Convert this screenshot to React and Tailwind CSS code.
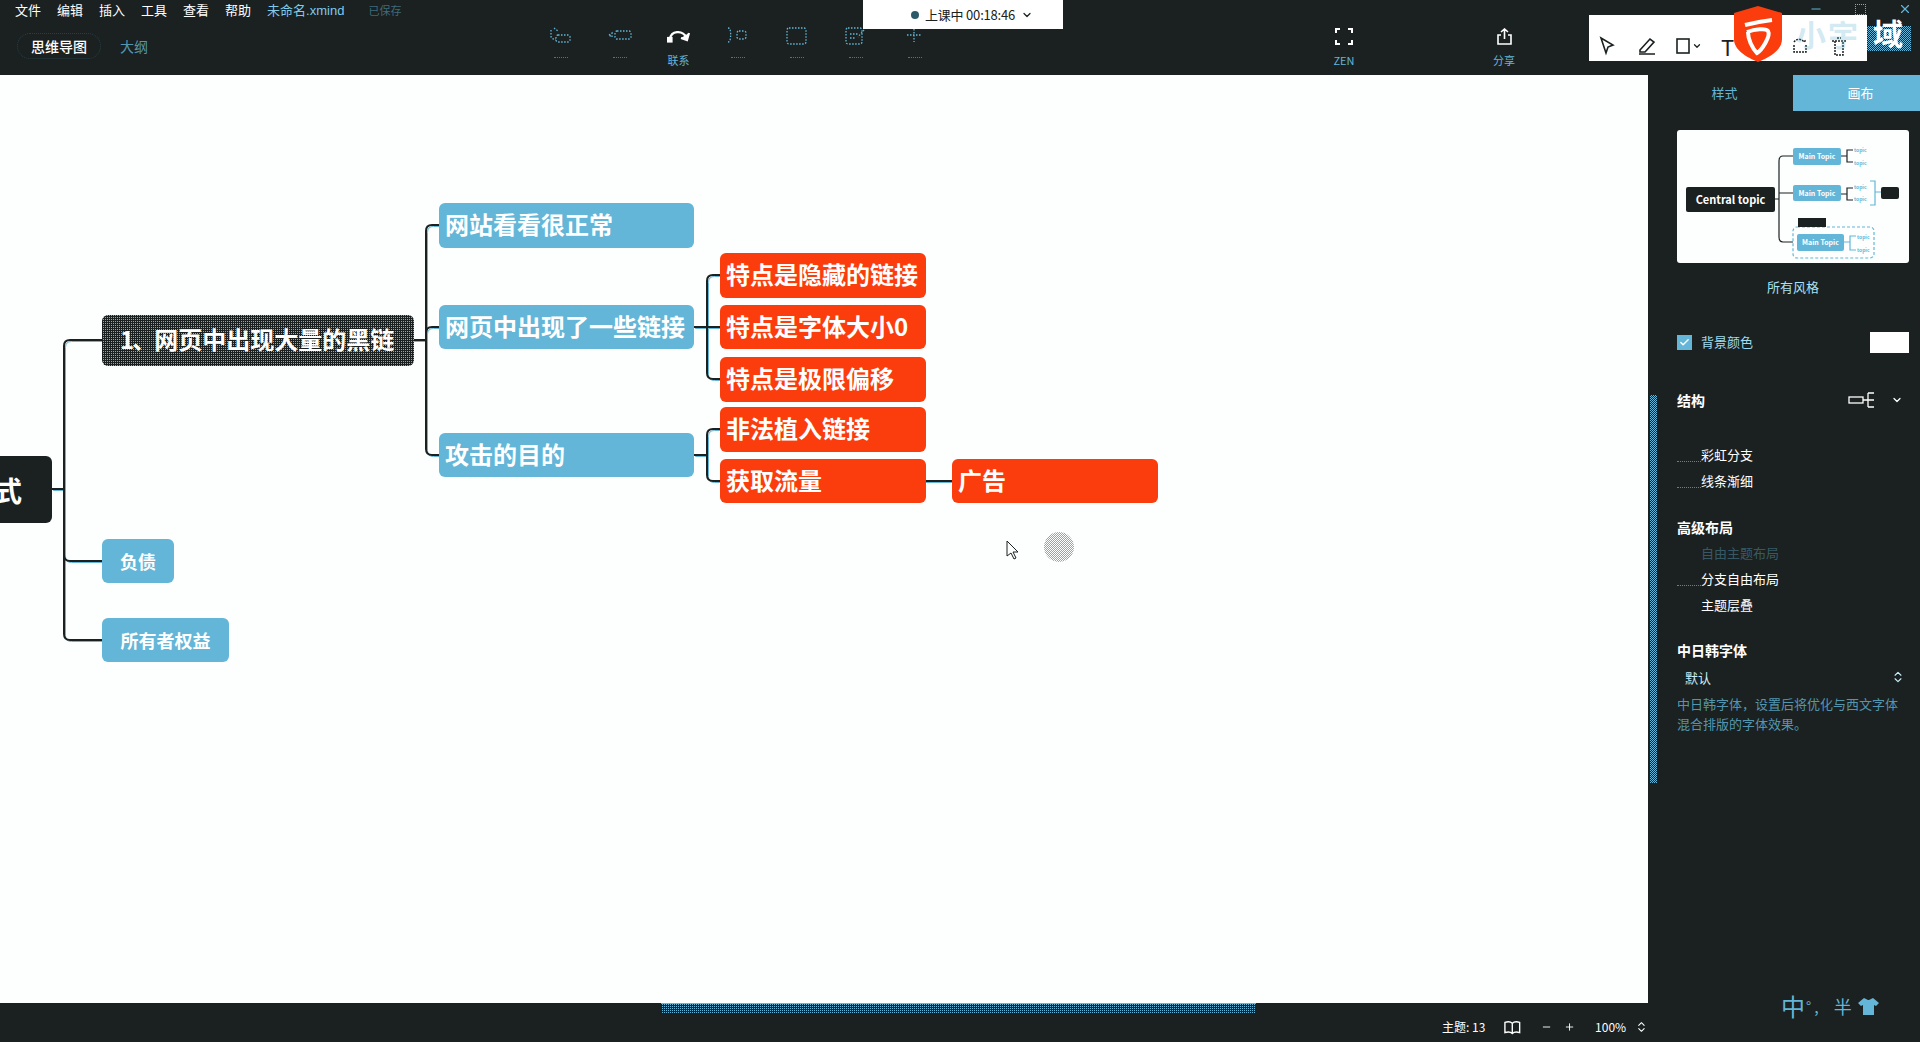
import React from "react";
import { Check, ChevronDown, ChevronsUpDown, Minus, Plus, X } from "lucide-react";

const menus = ["文件", "编辑", "插入", "工具", "查看", "帮助"];

const dim = { strokeDasharray: "1.5 1.5" };

const tools = [
  {
    label: null,
    icon: (
      <g {...dim}>
        <path d="M2 3v6a3 3 0 0 0 3 3h2" />
        <rect x="7" y="8" width="14" height="7" rx="2" />
        <path d="M5 1l4 3" />
      </g>
    ),
  },
  {
    label: null,
    icon: (
      <g {...dim}>
        <path d="M1 8l3-2v4z" />
        <rect x="7" y="4" width="16" height="8" rx="2" />
      </g>
    ),
  },
  {
    label: "联系",
    icon: (
      <g strokeWidth="2.2">
        <path d="M3 12c1-8 12-10 17-1" />
        <path d="M22 6l-2 7-6-2" fill="#ffffff" />
        <rect x="1" y="11" width="3.5" height="3.5" fill="#ffffff" />
      </g>
    ),
  },
  {
    label: null,
    icon: (
      <g {...dim}>
        <path d="M2 1c3 0 2 4 3 7-1 2 0 7-3 7" />
        <rect x="11" y="4" width="9" height="8" rx="2" />
      </g>
    ),
  },
  {
    label: null,
    icon: <rect x="2" y="1" width="19" height="16" rx="2" {...dim} />,
  },
  {
    label: null,
    icon: (
      <g {...dim}>
        <rect x="2" y="1" width="16" height="16" rx="2" />
        <path d="M6 7h8M6 11h5M20 3l-6 7" />
      </g>
    ),
  },
  {
    label: null,
    icon: <path d="M11 2v13M4 8h14" {...dim} />,
  },
];

// 连线：[起点x, 起点y, 拐点x, 终点y, 终点x]
const branches = [
  [52, 414, 64, 265, 102],
  [52, 414, 64, 486, 102],
  [52, 414, 64, 565, 102],
  [413, 265, 426, 150, 439],
  [413, 265, 426, 252, 439],
  [413, 265, 426, 380, 439],
  [694, 252, 707, 200, 720],
  [694, 252, 707, 252, 720],
  [694, 252, 707, 304, 720],
  [694, 380, 707, 354, 720],
  [694, 380, 707, 406, 720],
];

const elbow = ([x1, y1, mx, y2, x2]) => {
  if (y1 === y2) return `M${x1} ${y1}H${x2}`;
  const r = y2 > y1 ? 6 : -6;
  return `M${x1} ${y1}H${mx}V${y2 - r}Q${mx} ${y2} ${mx + 6} ${y2}H${x2}`;
};

const nodes = [
  { text: "网站看看很正常", x: 439, y: 128, w: 255, h: 45, tone: "blue" },
  { text: "网页中出现了一些链接", x: 439, y: 230, w: 255, h: 44, tone: "blue" },
  { text: "攻击的目的", x: 439, y: 358, w: 255, h: 44, tone: "blue" },
  { text: "特点是隐藏的链接", x: 720, y: 178, w: 206, h: 45, tone: "red" },
  { text: "特点是字体大小0", x: 720, y: 230, w: 206, h: 44, tone: "red" },
  { text: "特点是极限偏移", x: 720, y: 282, w: 206, h: 45, tone: "red" },
  { text: "非法植入链接", x: 720, y: 332, w: 206, h: 45, tone: "red" },
  { text: "获取流量", x: 720, y: 384, w: 206, h: 44, tone: "red" },
  { text: "广告", x: 952, y: 384, w: 206, h: 44, tone: "red" },
];

function Node({ text, x, y, w, h, tone }) {
  return (
    <div
      className={`absolute flex items-center rounded-[6px] pb-[3px] pl-[6px] text-[24px] leading-none font-bold text-white ${
        tone === "red" ? "bg-[#fb3c0d]" : "bg-[#63b6d7]"
      }`}
      style={{ left: x, top: y, width: w, height: h }}
    >
      {text}
    </div>
  );
}

function Preview() {
  return (
    <div className="relative h-[133px] w-[232px] rounded-[3px] bg-[#fdfffe]">
      <svg className="absolute inset-0" width="232" height="133" fill="none" stroke="#1b2121" strokeWidth="1.2">
        <path d="M98 69h4M102 69V31q0-5 4-5h10M102 63h14M102 69v38q0 5 4 5h10" />
        <path d="M164 26h6M170 26v-6h6M170 26v6h6M164 64h6M170 64v-6h6M170 64v6h6" />
        <path d="M167 112h6M173 112v-6h6M173 112v8h6" stroke="#63b6d7" />
        <path d="M193 51h5v24h-5M198 62h6" stroke="#63b6d7" />
        <rect x="116" y="97" width="81" height="31" rx="4" stroke="#63b6d7" strokeDasharray="3 2" />
      </svg>
      <div className="absolute top-[57px] left-[9px] flex h-[25px] w-[89px] items-center justify-center rounded-[2px] bg-[#1b2121] text-[11px] font-semibold text-white">
        Central topic
      </div>
      <div className="absolute top-[18px] left-[116px] flex h-[17px] w-[48px] items-center justify-center rounded-[2px] bg-[#63b6d7] text-[7px] font-bold text-white">
        Main Topic
      </div>
      <div className="absolute top-[55px] left-[116px] flex h-[16px] w-[48px] items-center justify-center rounded-[2px] bg-[#63b6d7] text-[7px] font-bold text-white">
        Main Topic
      </div>
      <div className="absolute top-[104px] left-[120px] flex h-[17px] w-[47px] items-center justify-center rounded-[2px] bg-[#63b6d7] text-[7px] font-bold text-white">
        Main Topic
      </div>
      <div className="absolute top-[88px] left-[121px] h-[9px] w-[28px] bg-[#1b2121]" />
      <div className="absolute top-[57px] left-[204px] h-[12px] w-[18px] rounded-[2px] bg-[#1b2121]" />
      {[
        [177, 16],
        [177, 29],
        [177, 53],
        [177, 65],
        [180, 103],
        [180, 116],
      ].map(([x, y]) => (
        <span key={`${x}-${y}`} className="absolute text-[5px] leading-[8px] font-bold text-[#63b6d7]" style={{ left: x, top: y }}>
          topic
        </span>
      ))}
    </div>
  );
}

function Row({ text, mark, muted }) {
  return (
    <div className="flex h-[26px] items-center">
      <span className={`h-px w-[24px] ${mark ? "translate-y-[7px] border-b border-dotted border-[#63b6d7]/70" : ""}`} />
      <span className={muted ? "text-[#63b6d7]/40" : "text-white"}>{text}</span>
    </div>
  );
}

export default function App() {
  return (
    <div className="flex h-[1042px] w-[1920px] flex-col overflow-hidden bg-[#1b2121] font-['Noto_Sans_CJK_SC','Noto_Sans',sans-serif] text-[13px] text-[#63b6d7]">
      <header className="relative flex h-[75px] shrink-0">
        <div className="w-[531px] shrink-0">
          <div className="flex h-[20px] items-center gap-4 pl-[15px] text-white">
            {menus.map((m) => (
              <span key={m}>{m}</span>
            ))}
            <span className="text-[#7fcbe8]">
              未命名<span className="font-['Liberation_Sans',sans-serif]">.xmind</span>
            </span>
            <span className="ml-2 text-[11px] text-[#63b6d7]/50">已保存</span>
          </div>
          <div className="mt-[13px] flex items-center pl-[17px]">
            <span className="flex h-[26px] w-[84px] items-center justify-center rounded-full border border-dotted border-[#63b6d7]/20 text-[14px] font-medium text-white">
              思维导图
            </span>
            <span className="ml-[19px] text-[14px] text-[#63b6d7]/80">大纲</span>
          </div>
        </div>

        <div className="flex">
          {tools.map((t, i) => (
            <div key={i} className="flex w-[59px] flex-col items-center pt-[27px]">
              <svg width="24" height="18" viewBox="0 0 24 18" fill="none" stroke={t.label ? "#ffffff" : "#63b6d7"} strokeWidth="1.3">
                {t.icon}
              </svg>
              {t.label ? (
                <span className="mt-[7px] text-[11px] leading-[16px]">{t.label}</span>
              ) : (
                <span className="mt-[12px] h-px w-[14px] border-t border-dotted border-[#63b6d7]/60" />
              )}
            </div>
          ))}
        </div>

        <div className="ml-[370px] flex w-[60px] flex-col items-center pt-[28px]">
          <svg width="18" height="17" viewBox="0 0 18 17" fill="none" stroke="#ffffff" strokeWidth="2">
            <path d="M1 5V1h4M13 1h4v4M17 12v4h-4M5 16H1v-4" />
          </svg>
          <span className="mt-[7px] text-[11px] leading-[16px]">ZEN</span>
        </div>
        <div className="ml-[100px] flex w-[60px] flex-col items-center pt-[28px]">
          <svg width="17" height="17" viewBox="0 0 17 17" fill="none" stroke="#ffffff" strokeWidth="1.6">
            <path d="M5 7H2v9h13V7h-3M8.5 11V1M5 4l3.5-3L12 4" />
          </svg>
          <span className="mt-[7px] text-[11px] leading-[16px]">分享</span>
        </div>

        {/* 上课计时 */}
        <div className="absolute top-0 left-[863px] flex h-[29px] w-[200px] items-center justify-center gap-[6px] bg-white pl-[18px] text-[13px] text-[#1b2121]">
          <span className="h-[8px] w-[8px] rounded-full bg-[#2d5a6b]" />
          <span className="tracking-[-0.2px]">上课中 00:18:46</span>
          <ChevronDown size={12} strokeWidth={2.5} />
        </div>

        {/* 窗口按钮 */}
        <div className="absolute top-[2px] right-[8px] flex items-center gap-[32px] text-[#63b6d7]">
          <Minus size={14} />
          <span className="h-[11px] w-[11px] border border-dotted border-[#63b6d7]" />
          <X size={14} />
        </div>

        {/* 标注工具条 */}
        <div className="absolute top-[15px] left-[1589px] flex h-[46px] w-[278px] items-center bg-white pt-[15px] pl-[8px] text-[#1b2121]">
          <svg width="20" height="20" viewBox="0 0 20 20" fill="none" stroke="#1b2121" strokeWidth="1.6">
            <path d="M4 2l12 7-5 2-2 6z" />
          </svg>
          <svg className="ml-[20px]" width="20" height="20" viewBox="0 0 20 20" fill="none" stroke="#1b2121" strokeWidth="1.6">
            <path d="M3 14L13 3l4 3-9 10H3zM2 18h16" />
          </svg>
          <svg className="ml-[18px]" width="16" height="18" viewBox="0 0 16 18" fill="none" stroke="#1b2121" strokeWidth="1.6">
            <rect x="2" y="2" width="12" height="14" />
          </svg>
          <ChevronDown className="ml-[1px]" size={10} strokeWidth={3} />
          <span className="ml-[19px] text-[22px] leading-none">T</span>
          <svg className="ml-[56px]" width="20" height="20" viewBox="0 0 20 20" fill="none" stroke="#1b2121" strokeWidth="1.5">
            <path d="M4 9v7h12V9M4 6a6 6 0 0 1 10 0l2-2" strokeDasharray="2 1" />
          </svg>
          <svg className="ml-[19px]" width="20" height="22" viewBox="0 0 20 22" fill="none" stroke="#1b2121" strokeWidth="1.5">
            <path d="M3 6h14M6 6v14h8V6M8 3h4" strokeDasharray="2 1" />
          </svg>
        </div>

        {/* 水印 */}
        <div className="absolute top-[26px] left-[1867px] h-[25px] w-[44px] bg-[conic-gradient(#63b6d7_25%,#1b2121_0_50%,#63b6d7_0_75%,#1b2121_0)] bg-[length:2px_2px]" />
        <div className="absolute top-[15px] left-[1796px] text-[30px] leading-[36px] font-bold tracking-[2px] whitespace-nowrap text-[#63b6d7]/30">
          小宇
        </div>
        <div className="absolute top-[14px] left-[1873px] text-[30px] leading-[36px] font-bold whitespace-nowrap text-white">域</div>
        <svg className="absolute top-[6px] left-[1734px]" width="48" height="56" viewBox="0 0 48 56">
          <path d="M24 0l24 7v26c0 11-12 18-24 23C12 51 0 44 0 33V7z" fill="#fb3c0d" />
          <path d="M11 19c8-2 18-4 27-5M13 26c8-3 19-4 21-1 3 5-6 19-11 22-5-5-9-14-9-21" fill="none" stroke="#fdfffe" strokeWidth="4" />
        </svg>
      </header>

      <div className="flex min-h-0 flex-1">
        <div className="flex w-[1648px] shrink-0 flex-col">
          <main className="relative h-[928px] overflow-hidden bg-[#fdfffe]">
            <svg className="absolute inset-0" width="1648" height="928" fill="none">
              {branches.map((b, i) => (
                <path key={`s${i}`} d={elbow(b)} stroke="#63b6d7" strokeWidth="1" transform="translate(1.5 1.5)" />
              ))}
              {branches.map((b, i) => (
                <path key={i} d={elbow(b)} stroke="#1b2121" strokeWidth="2" />
              ))}
              <path d="M926 406H952" stroke="#63b6d7" strokeWidth="1" transform="translate(0 1.5)" />
              <path d="M926 406H952" stroke="#1b2121" strokeWidth="2" />
            </svg>

            <div className="absolute top-[381px] left-[-60px] flex h-[67px] w-[112px] items-center justify-end rounded-[6px] bg-[#1b2121] pr-[30px] text-[28px] leading-none font-bold text-white">
              式
            </div>
            <div className="absolute top-[240px] left-[102px] flex h-[51px] w-[312px] items-center rounded-[6px] bg-[conic-gradient(#63b6d7_25%,#1b2121_0_50%,#1b2121_0_75%,#1b2121_0)] bg-[length:2px_2px] pb-[3px] pl-[18px] text-[24px] leading-none font-bold whitespace-nowrap text-white">
              <span className="tracking-[-2px]">1、</span>网页中出现大量的黑链
            </div>
            {nodes.map((n) => (
              <Node key={n.text} {...n} />
            ))}
            <div className="absolute top-[464px] left-[102px] flex h-[44px] w-[72px] items-center justify-center rounded-[6px] bg-[#63b6d7] text-[18px] font-bold text-white">
              负债
            </div>
            <div className="absolute top-[543px] left-[102px] flex h-[44px] w-[127px] items-center justify-center rounded-[6px] bg-[#63b6d7] text-[18px] font-bold text-white">
              所有者权益
            </div>

            {/* 鼠标和光标圈 */}
            <svg className="absolute top-[465px] left-[1006px]" width="16" height="21" viewBox="0 0 16 21" fill="#fdfffe" stroke="#1b2121" strokeWidth="1">
              <path d="M1 1v15l4-3 3 6 2-1-3-6h5z" />
            </svg>
            <div className="absolute top-[457px] left-[1044px] h-[30px] w-[30px] rounded-full bg-[conic-gradient(#63b6d7_25%,#fdfffe_0_50%,#63b6d7_0_75%,#fdfffe_0)] bg-[length:2px_2px]" />
          </main>
          <footer className="relative flex h-[39px] items-center pt-[9px] text-white">
            <div className="absolute top-0 left-[661px] h-[11px] w-[595px] border-t border-[#63b6d7] bg-[conic-gradient(#63b6d7_25%,#1b2121_0_50%,#1b2121_0_75%,#1b2121_0)] bg-[length:2px_2px]" />
            <div className="ml-[1442px] text-[12px] whitespace-nowrap">主题: 13</div>
            <svg className="ml-[19px]" width="18" height="15" viewBox="0 0 18 15" fill="none" stroke="#ffffff" strokeWidth="1.5">
              <path d="M1 2c3-1 6-1 8 1 2-2 5-2 8-1v11c-3-1-6-1-8 1-2-2-5-2-8-1zM9 3v11" />
            </svg>
            <Minus className="ml-[20px]" size={12} />
            <Plus className="ml-[12px]" size={12} />
            <div className="ml-[20px] text-[12px] whitespace-nowrap">100%</div>
            <ChevronsUpDown className="ml-[9px]" size={14} />
          </footer>
        </div>

        <aside className="relative w-[272px] shrink-0 pl-[29px]">
          <div className="absolute top-[320px] left-[2px] h-[388px] w-[7px] bg-[conic-gradient(#63b6d7_25%,#1b2121_0_50%,#63b6d7_0_75%,#1b2121_0)] bg-[length:2px_2px]" />
          <div className="-ml-[29px] flex h-[36px]">
            <div className="flex w-[145px] items-center justify-center pl-[8px]">样式</div>
            <div className="flex w-[127px] items-center justify-center bg-[#63b6d7] pl-[8px] text-white">画布</div>
          </div>

          <div className="mt-[19px]">
            <Preview />
          </div>
          <div className="mt-[14px] w-[232px] text-center text-[#a9e1f5]">所有风格</div>

          <div className="mt-[35px] flex w-[232px] items-center">
            <span className="flex h-[15px] w-[15px] items-center justify-center bg-[#63b6d7]">
              <Check size={11} strokeWidth={3} color="#ffffff" />
            </span>
            <span className="ml-[9px] text-[#9fdcf2]">背景颜色</span>
            <span className="ml-auto h-[21px] w-[39px] bg-white" />
          </div>

          <div className="mt-[37px] flex w-[232px] items-center">
            <span className="text-[14px] font-bold text-white">结构</span>
            <svg className="ml-auto" width="27" height="16" viewBox="0 0 27 16" fill="none" stroke="#ffffff" strokeWidth="1.3">
              <rect x="1" y="5" width="14" height="6" />
              <path d="M15 8h5M20 1v14M20 1h6M20 8h6M20 15h6" />
            </svg>
            <ChevronDown className="mr-[6px] ml-[16px]" size={12} strokeWidth={2.5} color="#ffffff" />
          </div>

          <div className="mt-[31px]">
            <Row text="彩虹分支" mark />
            <Row text="线条渐细" mark />
          </div>

          <div className="mt-[23px] text-[14px] font-bold text-white">高级布局</div>
          <div className="mt-[2px]">
            <Row text="自由主题布局" muted />
            <Row text="分支自由布局" mark />
            <Row text="主题层叠" />
          </div>

          <div className="mt-[22px] text-[14px] font-bold text-white">中日韩字体</div>
          <div className="mt-[7px] flex w-[232px] items-center pl-[8px] text-[#c8eefb]">
            <span>默认</span>
            <ChevronsUpDown className="mr-[4px] ml-auto" size={14} />
          </div>
          <p className="mt-[7px] w-[226px] text-[13px] leading-[20px] text-[#63b6d7]/80">
            中日韩字体，设置后将优化与西文字体混合排版的字体效果。
          </p>

          {/* 输入法状态 */}
          <div className="absolute top-[919px] left-[133px] flex items-center text-[#63b6d7]">
            <span className="text-[24px] leading-none">中</span>
            <span className="ml-[1px] text-[14px] leading-none">°</span>
            <span className="ml-[3px] text-[16px] leading-none">,</span>
            <span className="ml-[15px] text-[18px] leading-none">半</span>
            <svg className="ml-[6px]" width="21" height="19" viewBox="0 0 21 19" fill="#63b6d7">
              <path d="M6 1l4 2 1 0 4-2 6 5-3 3-2-1v10H5V8L3 9 0 6z" />
            </svg>
          </div>
        </aside>
      </div>
    </div>
  );
}
